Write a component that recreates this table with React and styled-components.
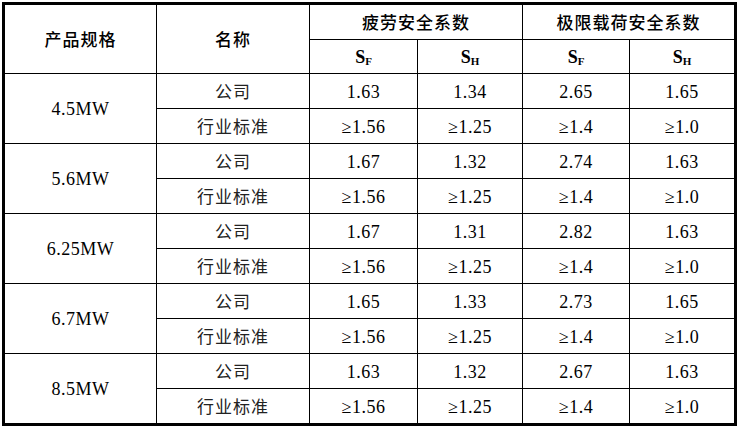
import React from 'react'
import styled, { createGlobalStyle } from 'styled-components'

const GlobalStyle = createGlobalStyle`
  html, body {
    margin: 0;
    padding: 0;
    background: #ffffff;
  }
`

const Page = styled.div`
  padding: 2px 0 0 2px;
  width: 740px;
  height: 428px;
  box-sizing: border-box;
  background: #fff;
`

const Frame = styled.div`
  width: 735px;
  border: 3px solid #000;
  box-sizing: border-box;
  display: grid;
  grid-template-columns: 151px 152px 107px 104px 106px 104px;
  grid-template-rows: 34px 33px repeat(10, 34px);
  gap: 1px;
  background: #000;
`

const Cell = styled.div`
  background: #fff;
  display: flex;
  align-items: center;
  justify-content: center;
  grid-column: ${(p) => p.col || 'auto'};
  grid-row: ${(p) => p.row || 'auto'};
  font-family: ${(p) =>
    p.cjk
      ? '"Noto Sans CJK SC", "Noto Sans", sans-serif'
      : '"Liberation Serif", "Noto Sans CJK SC", serif'};
  font-size: ${(p) => (p.cjk ? '17px' : '18px')};
  font-weight: ${(p) => (p.head ? 500 : 400)};
  color: ${(p) => (p.cjk && !p.head ? '#222' : '#000')};
  letter-spacing: ${(p) => (p.cjk ? '1px' : '0.5px')};
  padding-bottom: ${(p) => (p.cjk ? '2px' : '0')};
  padding-top: ${(p) => (p.cjk ? '0' : '2px')};
`

const Sym = styled.span`
  font-family: "Liberation Serif", serif;
  font-weight: 700;
  font-size: 18px;
  letter-spacing: 0;
  sub {
    font-size: 11px;
    vertical-align: -2px;
  }
`

const rows = [
  { spec: '4.5MW', co: ['1.63', '1.34', '2.65', '1.65'] },
  { spec: '5.6MW', co: ['1.67', '1.32', '2.74', '1.63'] },
  { spec: '6.25MW', co: ['1.67', '1.31', '2.82', '1.63'] },
  { spec: '6.7MW', co: ['1.65', '1.33', '2.73', '1.65'] },
  { spec: '8.5MW', co: ['1.63', '1.32', '2.67', '1.63'] },
]

const standard = ['≥1.56', '≥1.25', '≥1.4', '≥1.0']

export default function App() {
  return (
    <Page>
      <GlobalStyle />
      <Frame>
        <Cell cjk head col="1" row="1 / span 2">产品规格</Cell>
        <Cell cjk head col="2" row="1 / span 2">名称</Cell>
        <Cell cjk head col="3 / span 2" row="1">疲劳安全系数</Cell>
        <Cell cjk head col="5 / span 2" row="1">极限载荷安全系数</Cell>
        <Cell col="3" row="2"><Sym>S<sub>F</sub></Sym></Cell>
        <Cell col="4" row="2"><Sym>S<sub>H</sub></Sym></Cell>
        <Cell col="5" row="2"><Sym>S<sub>F</sub></Sym></Cell>
        <Cell col="6" row="2"><Sym>S<sub>H</sub></Sym></Cell>
        {rows.map((r, i) => {
          const top = 3 + i * 2
          return (
            <React.Fragment key={r.spec}>
              <Cell col="1" row={`${top} / span 2`}>{r.spec}</Cell>
              <Cell cjk col="2" row={`${top}`}>公司</Cell>
              {r.co.map((v, j) => (
                <Cell key={'c' + j} col={`${3 + j}`} row={`${top}`}>{v}</Cell>
              ))}
              <Cell cjk col="2" row={`${top + 1}`}>行业标准</Cell>
              {standard.map((v, j) => (
                <Cell key={'s' + j} col={`${3 + j}`} row={`${top + 1}`}>{v}</Cell>
              ))}
            </React.Fragment>
          )
        })}
      </Frame>
    </Page>
  )
}
